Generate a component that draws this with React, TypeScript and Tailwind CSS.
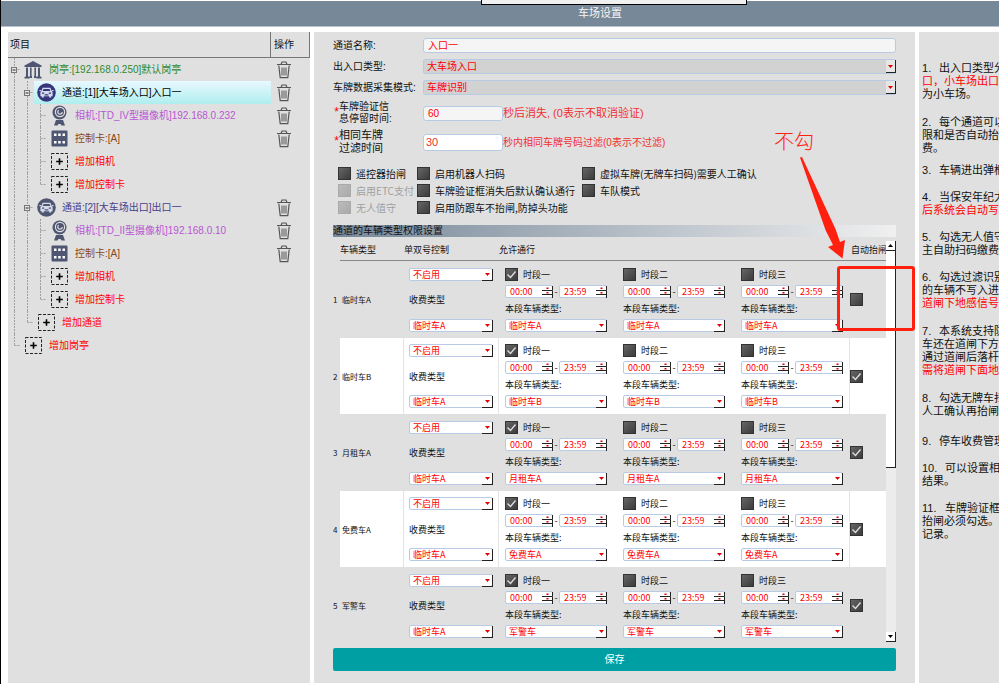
import React, { useState } from "react";

type Guide = "line" | "tee" | "end" | "box";
type IconName = "booth" | "lane" | "laneActive" | "camera" | "card" | "add";

interface TreeNode {
  guides: Guide[];
  icon: IconName;
  text: string;
  color: string;
  removable?: boolean;
}

const nodes: TreeNode[] = [
  { guides: ["box"], icon: "booth", text: "岗亭:[192.168.0.250]默认岗亭", color: "text-[#2e8b2e]", removable: true },
  { guides: ["line", "box"], icon: "laneActive", text: "通道:[1][大车场入口]入口一", color: "text-black", removable: true },
  { guides: ["line", "line", "tee"], icon: "camera", text: "相机:[TD_IV型摄像机]192.168.0.232", color: "text-[#ba55d3]", removable: true },
  { guides: ["line", "line", "tee"], icon: "card", text: "控制卡:[A]", color: "text-[#8b4513]", removable: true },
  { guides: ["line", "line", "tee"], icon: "add", text: "增加相机", color: "text-[#ff0000]" },
  { guides: ["line", "line", "end"], icon: "add", text: "增加控制卡", color: "text-[#ff0000]" },
  { guides: ["line", "box"], icon: "lane", text: "通道:[2][大车场出口]出口一", color: "text-[#483d8b]", removable: true },
  { guides: ["line", "line", "tee"], icon: "camera", text: "相机:[TD_II型摄像机]192.168.0.10", color: "text-[#ba55d3]", removable: true },
  { guides: ["line", "line", "tee"], icon: "card", text: "控制卡:[A]", color: "text-[#8b4513]", removable: true },
  { guides: ["line", "line", "tee"], icon: "add", text: "增加相机", color: "text-[#ff0000]" },
  { guides: ["line", "line", "end"], icon: "add", text: "增加控制卡", color: "text-[#ff0000]" },
  { guides: ["line", "end"], icon: "add", text: "增加通道", color: "text-[#ff0000]" },
  { guides: ["end"], icon: "add", text: "增加岗亭", color: "text-[#ff0000]" },
];

const vehicles = [
  { name: "临时车A", auto: false },
  { name: "临时车B", auto: true },
  { name: "月租车A", auto: true },
  { name: "免费车A", auto: true },
  { name: "军警车", auto: true },
];

const periods = ["时段一", "时段二", "时段三"];

interface NoteLine {
  text: string;
  red?: boolean;
}

const notes: { lines: NoteLine[]; gap: string }[] = [
  { lines: [{ text: "出入口类型分" }, { text: "口，小车场出口", red: true }, { text: "为小车场。" }], gap: "mb-[15px]" },
  { lines: [{ text: "每个通道可以" }, { text: "限和是否自动抬" }, { text: "费。" }], gap: "mb-[9px]" },
  { lines: [{ text: "车辆进出弹框" }], gap: "mb-[14px]" },
  { lines: [{ text: "当保安年纪大" }, { text: "后系统会自动写", red: true }], gap: "mb-[14px]" },
  { lines: [{ text: "勾选无人值守" }, { text: "主自助扫码缴费" }], gap: "mb-[14px]" },
  { lines: [{ text: "勾选过滤识别" }, { text: "的车辆不写入进" }, { text: "道闸下地感信号", red: true }], gap: "mb-[15px]" },
  { lines: [{ text: "本系统支持防" }, { text: "车还在道闸下方" }, { text: "通过道闸后落杆" }, { text: "需将道闸下面地", red: true }], gap: "mb-[15px]" },
  { lines: [{ text: "勾选无牌车扫" }, { text: "人工确认再抬闸" }], gap: "mb-[17px]" },
  { lines: [{ text: "停车收费管理" }], gap: "mb-[14px]" },
  { lines: [{ text: "可以设置相" }, { text: "结果。" }], gap: "mb-[14px]" },
  { lines: [{ text: "车牌验证框" }, { text: "抬闸必须勾选。" }, { text: "记录。" }], gap: "" },
];

const TreeGuide = ({ kind }: { kind: Guide }) => (
  <svg width="13" height="23" viewBox="0 0 13 23" className="shrink-0" stroke="#a0a0a0" fill="none">
    {kind === "end" ? (
      <path d="M6.5 0V11.5" strokeDasharray="2 1" />
    ) : (
      <path d="M6.5 0V23" strokeDasharray="2 1" />
    )}
    {kind !== "line" && <path d="M6.5 11.5H12" strokeDasharray="2 1" />}
    {kind === "box" && (
      <>
        <rect x="3.5" y="9.5" width="5" height="5" fill="#e8e8e8" stroke="#777" />
        <path d="M4.5 12H7.5" stroke="#222" />
      </>
    )}
  </svg>
);

const NodeIcon = ({ name }: { name: IconName }) => {
  if (name === "booth") {
    return (
      <svg width="18" height="18" viewBox="0 0 18 18" fill="#4f5672">
        <path d="M9 0 17.5 4.6V6H.5V4.6Z" />
        <path d="M2 6.500h2V15H2zM6 6.500h1.600V15H6zM10.400 6.500H12V15h-1.600zM14 6.500h2V15h-2zM.5 16h5v1.500h-5zM12.500 16h5v1.500h-5zM1.500 15h3v1.200h-3zM5.600 15h2.400v2H5.600zM10 15h2.400v2H10zM13.500 15h3v1.200h-3z" />
      </svg>
    );
  }
  if (name === "lane" || name === "laneActive") {
    const disc = name === "lane" ? "#4f5672" : "#36367c";
    return (
      <svg width="19" height="19" viewBox="0 0 19 19">
        <circle cx="9.5" cy="9.5" r="9.3" fill={disc} />
        <path d="M5.600 4.800h7.800l1.200 3.200 1 .8v4.400h-1.400v1.200h-2v-1.200H6.800v1.200h-2v-1.200H3.400V8.800l1-.8z" fill="#d4dcec" />
        <path d="M6.500 5.900h6l.8 2.100H5.700zM5 9.400h2.200v1.400H5zM11.800 9.400H14v1.400h-2.200zM7.600 11.200h3.800v1.200H7.600z" fill={disc} />
        <path d="M2.400 7.500h1.800M14.800 7.500h1.800" stroke="#d4dcec" />
      </svg>
    );
  }
  if (name === "camera") {
    return (
      <svg width="17" height="21" viewBox="0 0 17 21" fill="none">
        <path d="M3 20.500 5 15h7l2 5.500h-3.500L9.500 19h-2L6.500 20.500Z" fill="#4f5672" />
        <circle cx="8.500" cy="7.500" r="7" fill="#4f5672" />
        <circle cx="9" cy="7" r="4.600" stroke="#e0e0e0" strokeWidth="1.200" />
        <circle cx="9" cy="7" r="2.200" stroke="#e0e0e0" strokeWidth="1.200" strokeDasharray="8 6" />
      </svg>
    );
  }
  if (name === "card") {
    return (
      <svg width="17" height="17" viewBox="0 0 17 17">
        <rect x=".5" y=".5" width="16" height="16" rx="1" fill="#4f5672" />
        <path d="M3 3.500h2.500V6H3zM7.200 3.500h2.500V6H7.200zM11.500 3.500H14V6h-2.500zM3 11h2.500v2.500H3zM7.200 11h2.500v2.500H7.200zM11.500 11H14v2.500h-2.500z" fill="#fff" />
      </svg>
    );
  }
  return (
    <svg width="17" height="17" viewBox="0 0 17 17" fill="none" stroke="#222">
      <rect x=".5" y=".5" width="16" height="16" strokeDasharray="3 1.500" />
      <path d="M8.500 5.200v6.600M5.200 8.500h6.600" stroke="#000" strokeWidth="1.600" />
    </svg>
  );
};

const TrashIcon = () => (
  <svg width="14" height="18" viewBox="0 0 14 18" fill="none" stroke="#555">
    <path d="M0 3.500h14M4 3.500 5 1h4l1 2.500" strokeWidth="1.200" />
    <path d="M1.800 4.500 3.200 16.700h7.600l1.400-12.200" strokeWidth="1.200" />
    <path d="M5 6.500v8M7 6.500v8M9 6.500v8" />
  </svg>
);

const Check = ({
  id,
  label,
  checked = false,
  disabled = false,
}: {
  id: string;
  label?: string;
  checked?: boolean;
  disabled?: boolean;
}) => {
  const [on, setOn] = useState(checked);
  return (
    <div className="flex items-center gap-[5px]">
      <span className="relative flex h-[13px] w-[13px] shrink-0">
        <input
          id={id}
          type="checkbox"
          aria-label={label ?? "自动抬闸"}
          checked={on}
          disabled={disabled}
          onChange={(e) => setOn(e.target.checked)}
          className="h-[13px] w-[13px] appearance-none border border-[#333] bg-linear-to-br from-[#666] to-[#3c3c3c] disabled:border-[#aaa] disabled:from-[#bbb] disabled:to-[#aaa]"
        />
        {on && (
          <svg width="13" height="13" viewBox="0 0 13 13" className="pointer-events-none absolute inset-0">
            <path d="M2.500 6.500 5.500 9.500 10.500 3.500" fill="none" stroke="#ddd" strokeWidth="1.400" />
          </svg>
        )}
      </span>
      {label && (
        <label
          htmlFor={id}
          className={disabled ? "whitespace-nowrap text-[#a0a0a0]" : "whitespace-nowrap"}
        >
          {label}
        </label>
      )}
    </div>
  );
};

const SmallSelect = ({ label, value }: { label: string; value: string }) => (
  <div className="relative flex">
    <select
      aria-label={label}
      defaultValue={value}
      className="h-[13px] w-full appearance-none rounded-[2px] border border-[#b9cbe4] bg-white pl-[3px] font-['Noto_Sans_CJK_SC',sans-serif] text-[9px] leading-[11px] text-[#ff0000]"
    >
      <option>{value}</option>
    </select>
    <span className="pointer-events-none absolute right-0 bottom-0 flex h-[12px] w-[11px] items-center justify-center border-r border-b border-[#222]">
      <svg width="5" height="3" viewBox="0 0 5 3">
        <path d="M0 0H5L2.500 3Z" fill="#e00000" />
      </svg>
    </span>
  </div>
);

const TimeBox = ({ label, value }: { label: string; value: string }) => (
  <div className="relative flex w-12">
    <input
      type="text"
      aria-label={label}
      defaultValue={value}
      className="h-[13px] w-full rounded-[2px] border border-[#b9cbe4] bg-white pl-1 font-['Noto_Sans_CJK_SC',sans-serif] text-[9px] leading-[11px] text-[#ff0000]"
    />
    <svg
      width="11"
      height="12"
      viewBox="0 0 11 12"
      className="pointer-events-none absolute right-0 bottom-0"
      fill="none"
      stroke="#222"
    >
      <path d="M0 4.500H10.500V0M0 8.500H10.500V5M10.500 8V12" />
      <path d="M4.500 1.500h2v1.500h-2zM4.500 6h2v1.500h-2z" fill="#e00000" stroke="none" />
    </svg>
  </div>
);

const WideSelect = ({ id, value }: { id: string; value: string }) => (
  <div className="relative flex flex-1">
    <select
      id={id}
      defaultValue={value}
      className="h-[15px] w-full appearance-none rounded-[2px] border border-[#b9cbe4] bg-[#d2d2d2] pl-[3px] text-[10px] leading-[13px] text-[#ff0000]"
    >
      <option>{value}</option>
    </select>
    <span className="pointer-events-none absolute top-px right-0 flex h-[13px] w-[10px] items-center justify-center border-r border-b border-[#222] bg-[#e6e6e6]">
      <svg width="5" height="3" viewBox="0 0 5 3">
        <path d="M0 0H5L2.500 3Z" fill="#e00000" />
      </svg>
    </span>
  </div>
);

const TreePanel = () => (
  <aside className="w-[302px] shrink-0 bg-[#e0e0e0]">
    <div className="flex h-[26px] border-r border-b border-[#777] text-[10px]">
      <div className="flex flex-1 items-center border-r border-[#777] pl-[2px]">项目</div>
      <div className="flex w-[38px] items-center pl-[3px]">操作</div>
    </div>
    <ul>
      {nodes.map((node, i) => (
        <li key={i} className="flex h-[23px] items-center">
          {node.guides.map((kind, g) => (
            <TreeGuide key={g} kind={kind} />
          ))}
          <div
            className={
              node.icon === "laneActive"
                ? "flex h-full flex-1 items-center bg-linear-to-b from-[#e8f8ff] to-[#afeeee]"
                : "flex h-full flex-1 items-center"
            }
          >
            <span className="mr-1 flex w-6 shrink-0 justify-center">
              <NodeIcon name={node.icon} />
            </span>
            <button type="button" className={`${node.color} text-[10px] whitespace-nowrap`}>
              {node.text}
            </button>
          </div>
          <div className="flex w-[39px] shrink-0 pl-[6px]">
            {node.removable && (
              <button type="button" aria-label="删除">
                <TrashIcon />
              </button>
            )}
          </div>
        </li>
      ))}
    </ul>
  </aside>
);

const PermissionTable = () => (
  <div className="flex h-[401px]">
    <div className="min-w-0 flex-1 overflow-hidden">
      <table className="w-full table-fixed border-separate border-spacing-0 text-[9px]">
        <colgroup>
          <col className="w-[7px]" />
          <col className="w-16" />
          <col className="w-[95px]" />
          <col />
          <col className="w-9" />
        </colgroup>
        <thead>
          <tr className="h-5 text-left">
            <th />
            <th className="border-b border-[#888] font-normal whitespace-nowrap">车辆类型</th>
            <th className="border-b border-[#888] font-normal">单双号控制</th>
            <th className="border-b border-[#888] font-normal">允许通行</th>
            <th className="border-b border-[#888] pl-px font-normal whitespace-nowrap">自动抬闸</th>
          </tr>
        </thead>
        <tbody className="font-['Noto_Sans_CJK_SC',sans-serif] leading-[13px]">
          {vehicles.map((v, i) => {
            const cell = i % 2 ? "border-r border-[#e4e4e4] bg-white" : "";
            return (
              <tr key={v.name} className="odd:h-[77px] even:h-[76px]">
                <td className="text-[8px]">{i + 1}</td>
                <td className={`${cell} pl-[2px] text-[8px]`}>{v.name}</td>
                <td className={`${cell} pl-[5px]`}>
                  <div className="w-[84px]">
                    <SmallSelect label="单双号控制" value="不启用" />
                    <div className="flex h-[38px] items-center">收费类型</div>
                    <SmallSelect label="收费类型" value="临时车A" />
                  </div>
                </td>
                <td className={`${cell} pl-[6px]`}>
                  <div className="flex gap-4">
                    {periods.map((p, k) => (
                      <div key={p} className="w-[102px]">
                        <Check id={`period-${i}-${k}`} label={p} checked={k === 0} />
                        <div className="mt-1 flex items-center">
                          <TimeBox label={`${p}开始`} value="00:00" />
                          <span className="w-[6px] text-center leading-[13px]">-</span>
                          <TimeBox label={`${p}结束`} value="23:59" />
                        </div>
                        <div className="flex h-[21px] items-center">本段车辆类型:</div>
                        <SmallSelect label="本段车辆类型" value={v.name} />
                      </div>
                    ))}
                  </div>
                </td>
                <td className={i % 2 ? "bg-white" : ""}>
                  <Check id={`auto-${i}`} checked={v.auto} />
                </td>
              </tr>
            );
          })}
        </tbody>
      </table>
    </div>
    <div className="flex w-[10px] shrink-0 flex-col bg-[#ececec]">
      <button
        type="button"
        aria-label="向上"
        className="flex h-[10px] items-center justify-center border-r border-b border-[#222] bg-white"
      >
        <svg width="5" height="3" viewBox="0 0 5 3">
          <path d="M0 3H5L2.500 0Z" />
        </svg>
      </button>
      <div className="h-[217px] border-r border-b border-[#222] bg-white" />
      <div className="flex-1" />
      <button
        type="button"
        aria-label="向下"
        className="flex h-[10px] items-center justify-center border-r border-b border-[#222] bg-white"
      >
        <svg width="5" height="3" viewBox="0 0 5 3">
          <path d="M0 0H5L2.500 3Z" />
        </svg>
      </button>
    </div>
  </div>
);

const LaneForm = () => (
  <form
    className="flex min-w-0 flex-1 flex-col bg-[#e0e0e0] px-[19px] pt-[6px] text-[10px]"
    onSubmit={(e) => e.preventDefault()}
  >
    <div className="flex flex-col gap-[6px]">
      <div className="flex h-[15px] items-center">
        <label htmlFor="lane-name" className="w-[90px]">通道名称:</label>
        <input
          id="lane-name"
          type="text"
          defaultValue="入口一"
          className="h-[15px] flex-1 rounded-[3px] border border-[#b9cbe4] bg-[#f5f5f5] pl-1 text-[10px] text-[#ff0000]"
        />
      </div>
      <div className="flex h-[15px] items-center">
        <label htmlFor="lane-type" className="w-[90px]">出入口类型:</label>
        <WideSelect id="lane-type" value="大车场入口" />
      </div>
      <div className="flex h-[15px] items-center">
        <label htmlFor="plate-mode" className="w-[90px] whitespace-nowrap">车牌数据采集模式:</label>
        <WideSelect id="plate-mode" value="车牌识别" />
      </div>
    </div>

    <div className="mt-[6px] flex h-6 items-center">
      <span className="w-[6px] font-['Liberation_Mono',monospace] text-[12px] text-[#ff0000]">*</span>
      <label htmlFor="stay" className="w-[84px] leading-[12px]">
        车牌验证信
        <br />
        息停留时间:
      </label>
      <input
        id="stay"
        type="text"
        defaultValue="60"
        className="h-[15px] w-20 rounded-[3px] border border-[#b9cbe4] bg-[#f5f5f5] pl-1 text-[10px] text-[#ff0000]"
      />
      <span className="text-[11px] text-[#f03030]">秒后消失, (0表示不取消验证)</span>
    </div>
    <div className="mt-1 flex h-[26px] items-center">
      <span className="w-[6px] font-['Liberation_Mono',monospace] text-[12px] text-[#ff0000]">*</span>
      <label htmlFor="filter" className="w-[84px] text-[11px] leading-[13px]">
        相同车牌
        <br />
        过滤时间
      </label>
      <input
        id="filter"
        type="text"
        defaultValue="30"
        className="h-[17px] w-20 rounded-[3px] border border-[#b9cbe4] bg-white pl-[2px] text-[11px] text-[#f03030]"
      />
      <span className="text-[10px] text-[#f03030]">秒内相同车牌号码过滤(0表示不过滤)</span>
    </div>

    <div className="mt-3 grid grid-cols-[79px_165px_1fr] gap-y-1 pl-[5px] font-['Noto_Sans_CJK_SC',sans-serif] leading-[13px]">
      <Check id="remote" label="遥控器抬闸" />
      <Check id="robot" label="启用机器人扫码" />
      <Check id="virtual" label="虚拟车牌(无牌车扫码)需要人工确认" />
      <Check id="etc" label="启用ETC支付" disabled />
      <Check id="confirm" label="车牌验证框消失后默认确认通行" />
      <Check id="fleet" label="车队模式" />
      <Check id="unmanned" label="无人值守" disabled />
      <Check id="follow" label="启用防跟车不抬闸,防掉头功能" />
    </div>

    <h2 className="mt-[11px] mb-1 h-3 bg-linear-to-r from-[#778899] to-[#f0f0f0] leading-3">
      通道的车辆类型权限设置
    </h2>
    <PermissionTable />
    <button
      type="submit"
      className="mt-[6px] mb-3 h-[23px] rounded-[2px] bg-[#009fa3] text-[10px] text-white"
    >
      保存
    </button>
  </form>
);

const NotesPanel = () => (
  <section className="w-20 shrink-0 overflow-hidden bg-[#e0e0e0] pt-[30px] pl-[3px] text-[11px] leading-[13px] whitespace-nowrap">
    {notes.map((note, i) => (
      <p key={i} className={note.gap}>
        {note.lines.map((line, n) => (
          <span key={line.text} className={line.red ? "flex text-[#ff0000]" : "flex"}>
            {n === 0 && (
              <span className={i < 9 ? "w-[17px] shrink-0" : "w-[23px] shrink-0"}>{i + 1}.</span>
            )}
            {line.text}
          </span>
        ))}
      </p>
    ))}
  </section>
);

const App: React.FC = () => (
  <div className="relative min-h-screen overflow-hidden border-l border-black bg-white font-['Liberation_Sans','Noto_Sans_CJK_SC',sans-serif] text-[#111]">
    <header className="mt-px flex h-[26px] items-center justify-center border-b border-[#b8c2cc] bg-[#778899] pl-[200px]">
      <h1 className="text-[11px] text-[#f4f4f4]">车场设置</h1>
    </header>
    <main className="flex gap-1 pt-[5px] pl-[7px]">
      <TreePanel />
      <LaneForm />
      <NotesPanel />
    </main>

    <div className="absolute top-0 left-[480px] h-[5px] w-[266px] border border-t-0 border-black bg-[#f0f0f0]" />
    <div className="pointer-events-none absolute top-[266px] left-[836px] h-[65px] w-[78px] rounded-[3px] border-3 border-[#ff2010]" />
    <svg
      width="48"
      height="104"
      viewBox="0 0 48 104"
      className="pointer-events-none absolute top-[156px] left-[798px]"
    >
      <path d="M1 1.500 3 1 36.500 73 41 86 46 84 43.500 102.500 29 91 34 89 26.500 74Z" fill="#ff2010" />
    </svg>
    <span className="absolute top-[128px] left-[773px] text-[20px] leading-[28px] font-light text-[#ff2010]">
      不勾
    </span>
  </div>
);

export default App;
